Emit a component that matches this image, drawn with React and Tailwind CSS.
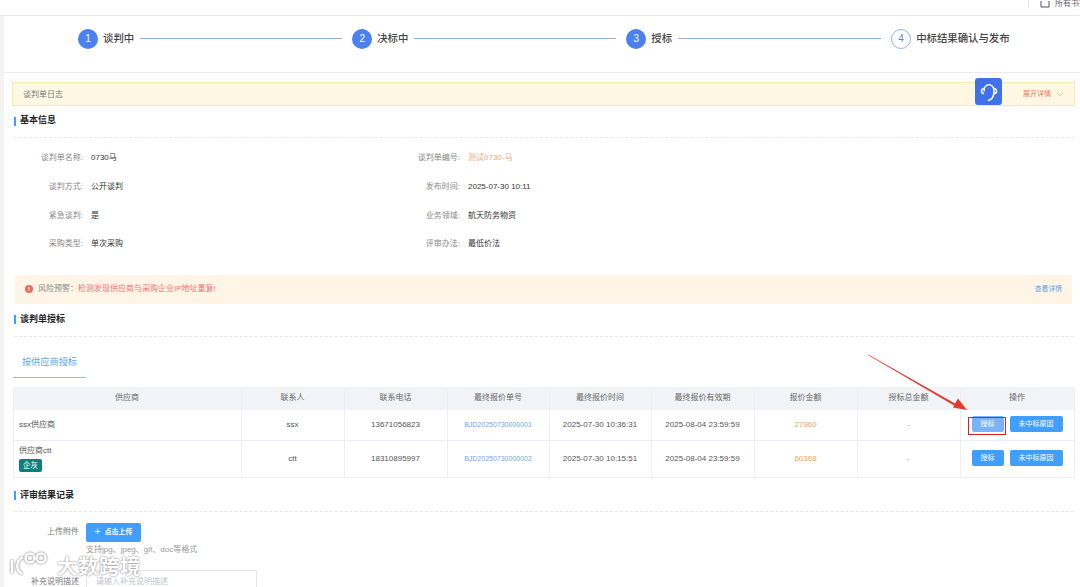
const font = { fontFamily: '"Liberation Sans", "Noto Sans CJK SC", sans-serif' };

const steps = [
    { n: 1, label: "谈判中", line: "w-[202px]" },
    { n: 2, label: "决标中", line: "w-[202px]" },
    { n: 3, label: "授标", line: "w-[203px]" },
    { n: 4, label: "中标结果确认与发布", todo: true },
];

const infoRows = [
    ["谈判单名称:", "0730马", "谈判单编号:", "测试0730-马"],
    ["谈判方式:", "公开谈判", "发布时间:", "2025-07-30 10:11"],
    ["紧急谈判:", "是", "业务领域:", "航天防务物资"],
    ["采购类型:", "单次采购", "评审办法:", "最低价法"],
];

const headers = ["供应商", "联系人", "联系电话", "最终报价单号", "最终报价时间", "最终报价有效期", "报价金额", "授标总金额", "操作"];
const gridCols = "grid grid-cols-[227px_103px_103px_102px_102px_103px_103px_103px_114px]";

const rows = [
    { name: "ssx供应商", contact: "ssx", phone: "13671056823", no: "BJD20250730000001", time: "2025-07-30 10:36:31", amount: "27960", h: "h-[30px]" },
    { name: "供应商ctt", tag: "企灰", contact: "ctt", phone: "18310895997", no: "BJD20250730000002", time: "2025-07-30 10:15:51", amount: "60368", h: "h-[37px]" },
];

const SectionTitle = ({ children, className }) => (
    <div className={`ml-[10px] mr-[6px] flex items-start border-b border-dashed border-gray-200 ${className}`}>
        <div className="flex h-[18px] items-center">
            <span className="h-[9px] w-[2px] bg-[#409eff]"></span>
            <span className="ml-[4px] text-[9px] font-bold text-[#222]">{children}</span>
        </div>
    </div>
);

const Cell = ({ children, className = "text-[8px] text-[#555]" }) => (
    <div className={`flex items-center justify-center border-l border-[#ebeef5] pr-px ${className}`}>{children}</div>
);

const App = () => {
    return (
        <div style={font} className="relative h-[587px] w-[1080px] overflow-hidden bg-white">
            {/* 顶部栏 */}
            <div className="flex h-[16px] items-start justify-end overflow-hidden border-b border-[#e8e8e8]">
                <div className="flex h-[8px] w-[52px] items-end border-l border-[#dde3ee] pl-[11px]">
                    <svg width="10" height="7" viewBox="0 0 10 7" fill="none" stroke="#555" strokeWidth="1" className="shrink-0">
                        <path d="M1 0v6h8V0" />
                    </svg>
                    <span className="ml-[5px] whitespace-nowrap text-[8px] leading-[9px] text-[#666]">所有书签</span>
                </div>
            </div>

            <div className="flex h-[571px]">
                <div className="w-[4px] shrink-0 bg-[#f3f3f3]"></div>
                <div className="min-w-0 flex-1">
                    {/* 步骤条 */}
                    <div className="flex h-[57px] items-center border-b border-[#ececec] pb-[11px] pl-[74px]">
                        {steps.map((s) => (
                            <div key={s.n} className="flex items-center">
                                {s.todo ? (
                                    <span className="flex h-[20px] w-[20px] shrink-0 items-center justify-center rounded-full border border-[#8fb0ea] text-[10px] text-[#5b85d8]">{s.n}</span>
                                ) : (
                                    <span className="flex h-[20px] w-[20px] shrink-0 items-center justify-center rounded-full bg-[#4a80f0] text-[10px] text-white">{s.n}</span>
                                )}
                                <span className="ml-[5px] whitespace-nowrap text-[10.4px] font-medium text-[#444]">{s.label}</span>
                                {s.line && <span className={`ml-[6px] mr-[10px] h-px bg-[#8fb0e0] ${s.line}`}></span>}
                            </div>
                        ))}
                    </div>

                    {/* 日志 */}
                    <div className="ml-[8px] mr-[5px] mt-[9px] flex h-[24px] items-center justify-between border border-[#f8e8b4] bg-[#fef8e3] px-[10px] pt-px">
                        <span className="text-[8px] text-[#777]">谈判单日志</span>
                        <div className="flex items-center gap-[5px] text-[#f0785a]">
                            <span className="text-[7px]">展开详情</span>
                            <svg width="8" height="5" viewBox="0 0 8 5" fill="none" stroke="#f0a58e" strokeWidth="0.8">
                                <path d="M1 0.8l3 3 3-3" />
                            </svg>
                        </div>
                    </div>

                    <SectionTitle className="mt-[6px] h-[26px]">基本信息</SectionTitle>

                    <div className="mt-[6px]">
                        {infoRows.map((r) => (
                            <div key={r[0]} className="grid h-[28.7px] grid-cols-[79px_297px_80px_1fr] items-center text-[8px]">
                                <span className="text-right text-[#888]">{r[0]}</span>
                                <span className="pl-[8px] text-[#333]">{r[1]}</span>
                                <span className="text-right text-[#888]">{r[2]}</span>
                                <span className={r[2] === "谈判单编号:" ? "pl-[8px] text-[#e8ab74]" : "pl-[8px] text-[#333]"}>{r[3]}</span>
                            </div>
                        ))}
                    </div>

                    {/* 风险预警 */}
                    <div className="ml-[11px] mr-[8px] mt-[16px] flex h-[29px] items-center justify-between bg-[#fef5e6] pl-[10px] pr-[10px]">
                        <div className="flex items-center text-[8px]">
                            <span className="flex h-[8px] w-[8px] items-center justify-center rounded-full bg-[#ee6a5f] text-[6px] font-bold leading-none text-white">!</span>
                            <span className="ml-[5px] text-[#888]">风险预警：</span>
                            <span className="text-[#f2727a]">检测发现供应商与采购企业IP地址重复!</span>
                        </div>
                        <span className="text-[6.8px] text-[#5b9fe8]">查看详情</span>
                    </div>

                    <SectionTitle className="mt-[7px] h-[26px]">谈判单授标</SectionTitle>

                    {/* 标签页 */}
                    <div className="ml-[9px] flex h-[41px] w-[73px] items-end justify-center border-b border-[#8fc0e8] pb-[7px]">
                        <span className="text-[9.2px] text-[#5ea5ee]">按供应商授标</span>
                    </div>

                    {/* 表格 */}
                    <div className="ml-[9px] mr-[5px] mt-[9px] border-x border-b border-[#ebeef5]">
                        <div className={`${gridCols} h-[23px] bg-[#f1f3f7]`}>
                            {headers.map((h, i) => (
                                <Cell key={h} className={i === 0 ? "border-l-0 text-[8px] text-[#666]" : "text-[8px] text-[#666]"}>{h}</Cell>
                            ))}
                        </div>
                        {rows.map((r, i) => (
                            <div key={r.no} className={`${gridCols} ${r.h} ${i > 0 ? "border-t border-[#ebeef5]" : ""}`}>
                                <div className="flex flex-col justify-center pl-[5px] text-[8px] text-[#555]">
                                    <span>{r.name}</span>
                                    {r.tag && (
                                        <span className="mt-[2px] flex h-[13px] w-[23px] items-center justify-center rounded-[2px] bg-[#0b7f7a] text-[7.5px] text-white">{r.tag}</span>
                                    )}
                                </div>
                                <Cell>{r.contact}</Cell>
                                <Cell>{r.phone}</Cell>
                                <Cell className="text-[7px] text-[#6fa8ee]">{r.no}</Cell>
                                <Cell>{r.time}</Cell>
                                <Cell>2025-08-04 23:59:59</Cell>
                                <Cell className="text-[8px] text-[#e8a565]">{r.amount}</Cell>
                                <Cell className="text-[8px] text-[#999]">-</Cell>
                                <Cell className="gap-[6px] pb-px">
                                    <button className={`flex h-[16px] w-[32px] items-center justify-center rounded-[2px] text-[7px] text-white ${i === 0 ? "bg-[#79b4fa]" : "bg-[#409eff]"}`}>授标</button>
                                    <button className="flex h-[16px] w-[53px] items-center justify-center rounded-[2px] bg-[#409eff] text-[7px] text-white">未中标原因</button>
                                </Cell>
                            </div>
                        ))}
                    </div>

                    <SectionTitle className="mt-[9px] h-[25px]">评审结果记录</SectionTitle>

                    {/* 上传 */}
                    <div className="mt-[11px] flex">
                        <span className="flex h-[19px] w-[75px] items-center justify-end text-[8px] text-[#777]">上传附件</span>
                        <div className="ml-[7px]">
                            <button className="flex h-[19px] w-[55px] items-center justify-center gap-[4px] rounded-[2px] bg-[#409eff] text-[7px] font-bold text-white">
                                <span className="text-[10px] font-normal leading-none">+</span>
                                点击上传
                            </button>
                            <p className="mt-[2px] text-[8px] text-[#999]">支持jpg、jpeg、gif、doc等格式</p>
                        </div>
                    </div>
                    <div className="mt-[14px] flex">
                        <span className="flex h-[24px] w-[75px] items-center justify-end text-[8px] text-[#777]">补充说明描述</span>
                        <div className="ml-[7px] flex h-[24px] w-[171px] items-center border border-[#e4e7ed] pl-[9px] text-[8px] text-[#c0c4cc]">请输入补充说明描述</div>
                    </div>
                </div>
            </div>

            {/* 客服悬浮按钮 */}
            <div className="absolute left-[975px] top-[78px] flex h-[27px] w-[27px] items-center justify-center rounded-[3px] bg-[#3f72ea]">
                <svg width="20" height="22" viewBox="0 0 20 22" fill="none" stroke="white" strokeWidth="1.5" strokeLinecap="round">
                    <path d="M5 10C5 1.500 15 1.500 15 10c0 6-2 8.500-5.500 9.500" />
                    <path d="M4.500 7.500C2 8 1.500 12 4.500 12.500" />
                    <path d="M15.500 7.500c2.500.5 3 4.500 0 5" />
                </svg>
            </div>

            {/* 标注箭头 */}
            <svg className="absolute left-[860px] top-[350px]" width="115" height="70" viewBox="0 0 115 70" fill="none">
                <path d="M8 5L8.300 4.500L95 53.500L98 48.500L107 60L93 57.500L94 55.500Z" fill="#e8392e" />
            </svg>
            <div className="absolute left-[968px] top-[417px] h-[18px] w-[38px] border-[1.5px] border-[#d9201c]"></div>

            {/* 水印 */}
            <div className="absolute left-[9px] top-[552px] flex items-start">
                <svg width="42" height="24" viewBox="0 0 42 24" fill="none" stroke="white" strokeWidth="2.500" className="[filter:drop-shadow(0_0_1px_rgba(0,0,0,0.6))]">
                    <path d="M3 8v13" />
                    <path d="M14 5C7 9 6 17 13 22" />
                    <circle cx="21" cy="6" r="4.500" />
                    <circle cx="32" cy="6" r="4.500" />
                </svg>
                <span className="ml-[6px] mt-[5px] text-[20.5px] font-bold leading-none tracking-[0.5px] text-white [text-shadow:0_0_2px_rgba(0,0,0,0.6)]">大数跨境</span>
            </div>
        </div>
    );
};

export default App;
